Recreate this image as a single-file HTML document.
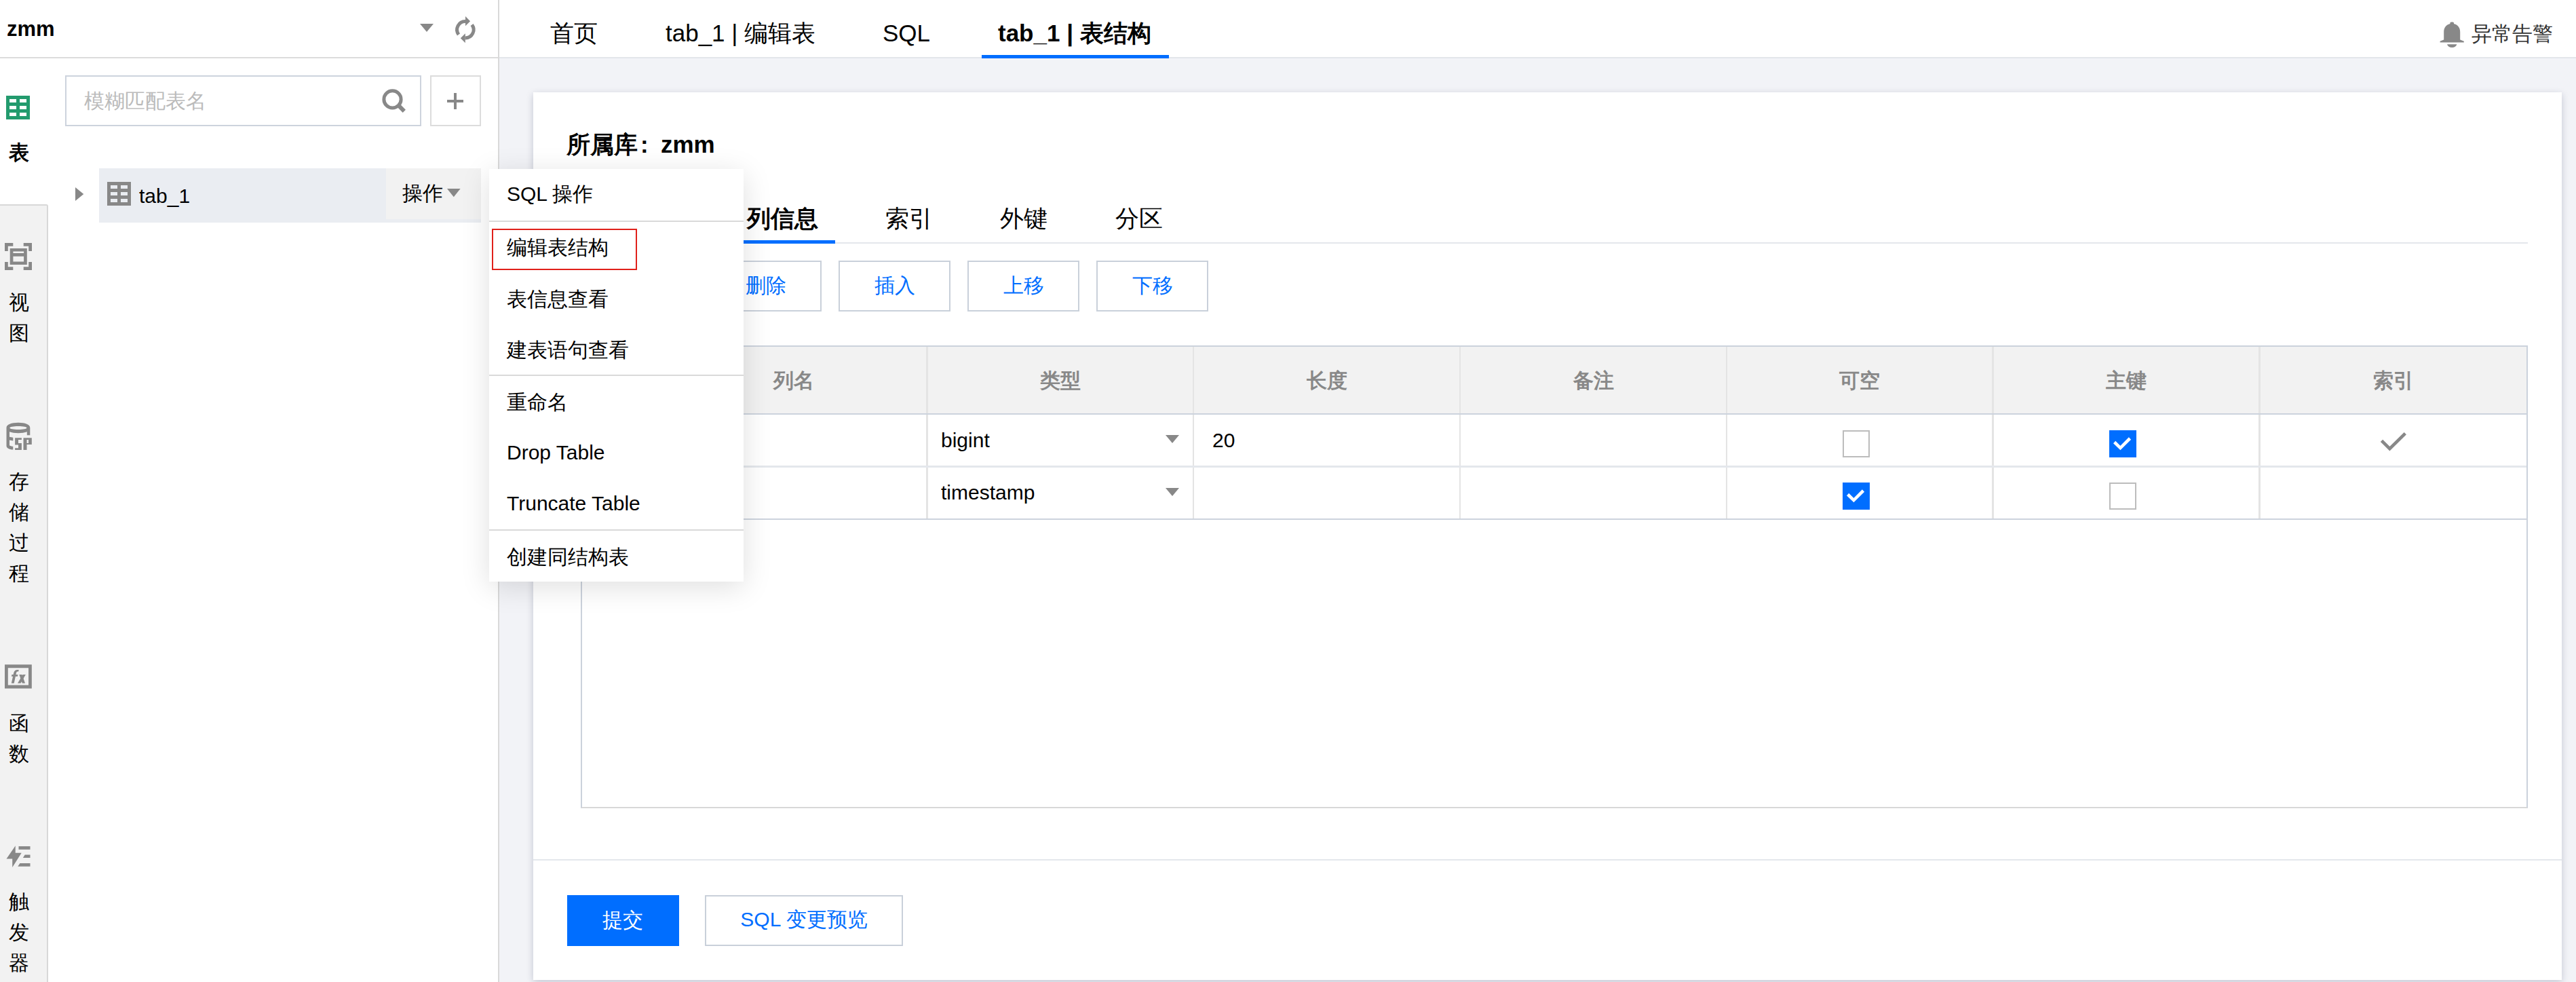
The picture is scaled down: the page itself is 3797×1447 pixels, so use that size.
<!DOCTYPE html>
<html><head><meta charset="utf-8">
<style>
html,body{margin:0;padding:0;}
body{width:3797px;height:1447px;overflow:hidden;position:relative;background:#f2f3f7;font-family:"Liberation Sans",sans-serif;color:#000;}
.a{position:absolute;}
.t{position:absolute;white-space:nowrap;line-height:1;}
svg{position:absolute;overflow:visible;}
/* left panel */
#lp{left:0;top:0;width:734px;height:1447px;background:#fff;border-right:2px solid #d9d9d9;}
#lphead{left:0;top:0;width:734px;height:84px;border-bottom:2px solid #dcdcdc;}
#strip{left:0;top:301px;width:69px;height:1146px;background:#f2f2f2;border-top:2px solid #d8d8d8;border-right:2px solid #d8d8d8;border-top-right-radius:3px;}
.sl{position:absolute;left:0;width:55px;text-align:center;font-size:30px;line-height:45px;color:#000;}
/* header */
#hd{left:736px;top:0;width:3061px;height:84px;background:#fff;border-bottom:2px solid #e3e6eb;}
.tab{position:absolute;top:0;font-size:35px;line-height:1;white-space:nowrap;}
/* card */
#card{left:786px;top:136px;width:2990px;height:1308px;background:#fff;box-shadow:0 3px 10px rgba(30,40,80,0.22);}
.btn{position:absolute;box-sizing:border-box;border:2px solid #c9d0da;background:#fff;color:#006eff;font-size:30px;text-align:center;white-space:nowrap;}
.th{position:absolute;top:511px;height:100px;font-size:30px;font-weight:bold;color:#888;line-height:100px;text-align:center;}
.cb{position:absolute;box-sizing:border-box;width:40px;height:40px;border:2px solid #bcbcbc;background:#fff;}
.cbc{position:absolute;width:40px;height:40px;background:#006eff;}
/* menu */
#menu{left:721px;top:249px;width:375px;height:608px;background:#fff;box-shadow:0 8px 40px rgba(0,0,0,0.13);}
.mi{position:absolute;left:26px;font-size:30px;line-height:1;white-space:nowrap;color:#000;}
.msep{position:absolute;left:0;width:375px;height:2px;background:#d9d9d9;}
</style></head>
<body>
<!-- left panel -->
<div id="lp" class="a"></div>
<div id="lphead" class="a"></div>
<div class="t" style="left:10px;top:27px;font-size:31px;font-weight:bold;">zmm</div>
<svg style="left:619px;top:35px" width="20" height="14"><path d="M0 0H20L10 12Z" fill="#888"/></svg>
<svg style="left:660px;top:15px" width="50" height="55" viewBox="0 0 50 55">
 <path d="M16 36A12.2 12.2 0 0 1 26 16.6" fill="none" stroke="#888" stroke-width="5"/>
 <path d="M26 9L33.1 16.2L26 23.2Z" fill="#888"/>
 <path d="M35.6 21.4A12.2 12.2 0 0 1 25.9 41" fill="none" stroke="#888" stroke-width="5"/>
 <path d="M25.8 34.2L18.8 41.2L25.8 48.2Z" fill="#888"/>
</svg>

<div id="strip" class="a"></div>

<!-- strip icons -->
<svg style="left:9px;top:141px" width="35" height="35" viewBox="0 0 35 35"><path fill="#239b6e" fill-rule="evenodd" d="M0 0H35V35H0Z M5 5V10H15V5Z M20 5V10H30V5Z M5 15V20H15V15Z M20 15V20H30V15Z M5 25V30H15V25Z M20 25V30H30V25Z"/></svg>
<div class="sl" style="top:202px;font-weight:bold;">表</div>
<svg style="left:7px;top:358px" width="40" height="40" viewBox="0 0 40 40"><g fill="#888">
 <path d="M0 0H12.3V4.8H4.8V12H0Z"/><path d="M40 0H27.7V4.8H35.2V12H40Z"/>
 <path d="M0 40H12.3V35.2H4.8V28H0Z"/><path d="M40 40H27.7V35.2H35.2V28H40Z"/>
 <path fill-rule="evenodd" d="M7.7 7.9H32.8V31.9H7.7Z M12.4 12.4V15.1H28.1V12.4Z M12.4 19.8V27.4H28.1V19.8Z"/>
</g></svg>
<div class="sl" style="top:423px;">视<br>图</div>
<svg style="left:0px;top:615px" width="55" height="55" viewBox="0 0 55 55"><g fill="#888">
 <path fill-rule="evenodd" d="M9.5 15.2C9.5 10.5 17 7.8 26.9 7.8C36.8 7.8 44.3 10.5 44.3 15.2V26.3H39.8V21.3C36.5 22.6 31.8 23.2 26.9 23.2C22 23.2 17.3 22.6 14 21.3V28.8L19.3 29.8V34.5L14 33.5V41.2C15.3 42.2 17 42.6 19.3 42.8V47.6C13 47.3 9.5 44.8 9.5 42V15.2Z M14.3 15.4C14.3 16.9 19.7 17.9 26.9 17.9C34.1 17.9 39.5 16.9 39.5 15.4C39.5 13.9 34.1 12.9 26.9 12.9C19.7 12.9 14.3 13.9 14.3 15.4Z"/>
 <path d="M22.1 30.3H31.9V32.9H27V38H31.9V47.9H22.1V45.3H27V40.5H22.1Z"/>
 <path fill-rule="evenodd" d="M34.5 30.3H46.8V40H39.5V47.9H34.5Z M39.5 33V38H42V33Z"/>
</g></svg>
<div class="sl" style="top:687px;">存<br>储<br>过<br>程</div>
<svg style="left:0px;top:970px" width="55" height="55" viewBox="0 0 55 55"><g fill="#888"><path fill-rule="evenodd" d="M7 9.2H46.8V44.5H7Z M11.8 14.2V39.5H42V14.2Z"/>
 <path d="M20.7 36.7H16.8L20.2 21.5C21 18.2 23 17 25.5 17H27.7L27.2 19.6H26C24.8 19.6 24.3 20.3 24 21.6Z"/>
 <path d="M17.4 24.1H26.4L25.9 26.7H16.9Z"/>
 <path d="M28.3 24.1H32.5L37 36.7H32.8Z"/>
 <path d="M33.6 24.1H37.8L30.5 36.7H26Z"/>
</g></svg>
<div class="sl" style="top:1043px;">函<br>数</div>
<svg style="left:0px;top:1235px" width="55" height="55" viewBox="0 0 55 55"><g fill="#888">
 <path d="M22.7 11.2V21.8H31.7L18.2 43.1V30.5H9.5Z"/>
 <path d="M27.5 12H44.5V16.8H27.5Z"/>
 <path d="M36.7 24.6H44.5V29.1H33.9Z"/>
 <path d="M29.4 37H44.5V41.7H26.3Z"/>
</g></svg>
<div class="sl" style="top:1306px;">触<br>发<br>器</div>

<!-- search -->
<div class="a" style="left:96px;top:111px;width:525px;height:75px;box-sizing:border-box;border:2px solid #cdd3dd;background:#fff;"></div>
<div class="t" style="left:124px;top:134px;font-size:30px;color:#bbb;">模糊匹配表名</div>
<svg style="left:550px;top:120px" width="60" height="60" viewBox="0 0 60 60"><circle cx="28.5" cy="26.4" r="12.6" fill="none" stroke="#888" stroke-width="5"/><path d="M36.2 34.2L45.8 43.8" stroke="#888" stroke-width="6"/></svg>
<div class="a" style="left:634px;top:111px;width:75px;height:75px;box-sizing:border-box;border:2px solid #dcdcdc;background:#fff;"></div>
<div class="a" style="left:658.6px;top:146.7px;width:24.6px;height:4.6px;background:#888;"></div>
<div class="a" style="left:668.5px;top:136.6px;width:4.8px;height:24.7px;background:#888;"></div>

<!-- tree row -->
<div class="a" style="left:146px;top:248px;width:563px;height:80px;background:#eaedf2;"></div>
<div class="a" style="left:569px;top:248px;width:140px;height:75px;background:#f2f2f2;"></div>
<svg style="left:111px;top:276px" width="13" height="20"><path d="M0 0L12.3 10L0 20Z" fill="#888"/></svg>
<svg style="left:158px;top:268px" width="35" height="35" viewBox="0 0 35 35"><path fill="#888" fill-rule="evenodd" d="M0 0H35V35H0Z M5 5V10H15V5Z M20 5V10H30V5Z M5 15V20H15V15Z M20 15V20H30V15Z M5 25V30H15V25Z M20 25V30H30V25Z"/></svg>
<div class="t" style="left:205px;top:274px;font-size:30px;">tab_1</div>
<div class="t" style="left:593px;top:270px;font-size:30px;">操作</div>
<svg style="left:659px;top:278px" width="20" height="13"><path d="M0 0H19.6L9.8 12.2Z" fill="#888"/></svg>


<!-- header -->
<div id="hd" class="a"></div>
<div class="tab" style="left:811px;top:31px;">首页</div>
<div class="tab" style="left:981px;top:31px;">tab_1 | 编辑表</div>
<div class="tab" style="left:1301px;top:31px;">SQL</div>
<div class="tab" style="left:1471px;top:31px;font-weight:bold;">tab_1 | 表结构</div>
<div class="a" style="left:1447px;top:81px;width:276px;height:5px;background:#006eff;"></div>
<svg style="left:3590px;top:30px" width="50" height="45" viewBox="0 0 50 45"><g fill="#888">
 <rect x="21.4" y="2.4" width="5.6" height="4" rx="1.5"/>
 <path d="M24.2 4.8C31.5 4.8 36.2 9.8 36.2 17V28.4L41.8 30.8V32.6H6.6V30.8L12.2 28.4V17C12.2 9.8 16.9 4.8 24.2 4.8Z"/>
 <path d="M17 35.2H31.4C30.6 38.2 27.8 40 24.2 40C20.6 40 17.8 38.2 17 35.2Z"/>
</g></svg>
<div class="t" style="left:3643px;top:35px;font-size:30px;color:#333;">异常告警</div>

<!-- card -->
<div id="card" class="a"></div>
<div class="t" style="left:835px;top:195px;font-size:35px;font-weight:bold;">所属库</div><div class="t" style="left:944px;top:195px;font-size:35px;font-weight:bold;">:</div><div class="t" style="left:974px;top:195px;font-size:35px;font-weight:bold;">zmm</div>
<div class="t" style="left:1101px;top:304px;font-size:35px;font-weight:bold;">列信息</div>
<div class="t" style="left:1305px;top:304px;font-size:35px;">索引</div>
<div class="t" style="left:1474px;top:304px;font-size:35px;">外键</div>
<div class="t" style="left:1644px;top:304px;font-size:35px;">分区</div>
<div class="a" style="left:836px;top:357px;width:2890px;height:2px;background:#e4e7ec;"></div>
<div class="a" style="left:1076px;top:354px;width:155px;height:5px;background:#006eff;"></div>
<div class="btn" style="left:856px;top:384px;width:165px;height:75px;line-height:69px;">添加</div>
<div class="btn" style="left:1046px;top:384px;width:165px;height:75px;line-height:69px;">删除</div>
<div class="btn" style="left:1236px;top:384px;width:165px;height:75px;line-height:69px;">插入</div>
<div class="btn" style="left:1426px;top:384px;width:165px;height:75px;line-height:69px;">上移</div>
<div class="btn" style="left:1616px;top:384px;width:165px;height:75px;line-height:69px;">下移</div>

<!-- table -->
<div class="a" style="left:856px;top:509px;width:2870px;height:682px;box-sizing:border-box;border:2px solid #cbd2dc;border-bottom-color:#d8d8d8;background:#fff;"></div>
<div class="a" style="left:858px;top:511px;width:2866px;height:98px;background:#f2f2f2;"></div>
<div class="a" style="left:973px;top:511px;width:2px;height:253px;background:#e4e4e4;"></div>
<div class="a" style="left:1365px;top:511px;width:3px;height:253px;background:#e4e4e4;"></div>
<div class="a" style="left:1758px;top:511px;width:2px;height:253px;background:#e4e4e4;"></div>
<div class="a" style="left:2151px;top:511px;width:2px;height:253px;background:#e4e4e4;"></div>
<div class="a" style="left:2544px;top:511px;width:2px;height:253px;background:#e4e4e4;"></div>
<div class="a" style="left:2936px;top:511px;width:3px;height:253px;background:#e4e4e4;"></div>
<div class="a" style="left:3329px;top:511px;width:3px;height:253px;background:#e4e4e4;"></div>
<div class="a" style="left:858px;top:609px;width:2866px;height:2px;background:#ccd3dd;"></div>
<div class="a" style="left:858px;top:686px;width:2866px;height:3px;background:#e4e7ec;"></div>
<div class="a" style="left:858px;top:764px;width:2866px;height:2px;background:#ccd3dd;"></div>
<div class="th" style="left:975px;width:390px;">列名</div>
<div class="th" style="left:1367px;width:391px;">类型</div>
<div class="th" style="left:1760px;width:391px;">长度</div>
<div class="th" style="left:2153px;width:391px;">备注</div>
<div class="th" style="left:2546px;width:390px;">可空</div>
<div class="th" style="left:2938px;width:392px;">主键</div>
<div class="th" style="left:3332px;width:391px;">索引</div>
<div class="t" style="left:1387px;top:634px;font-size:30px;">bigint</div>
<svg style="left:1718px;top:641px" width="22" height="14"><path d="M0 0H20L10 12Z" fill="#888"/></svg>
<div class="t" style="left:1787px;top:634px;font-size:30px;">20</div>
<div class="cb" style="left:2716px;top:634px;"></div>
<div class="cbc" style="left:3109px;top:634px;"><svg style="left:0;top:0" width="40" height="40"><path d="M7.6 17.5L16.4 26.1L30.5 12" fill="none" stroke="#fff" stroke-width="4.6"/></svg></div>
<svg style="left:3508px;top:636px" width="40" height="30"><path d="M2.5 13.3L14.4 25.2L37.3 2.6" fill="none" stroke="#888" stroke-width="4.7"/></svg>
<div class="t" style="left:1387px;top:711px;font-size:30px;">timestamp</div>
<svg style="left:1718px;top:719px" width="22" height="14"><path d="M0 0H20L10 12Z" fill="#888"/></svg>
<div class="cbc" style="left:2716px;top:711px;"><svg style="left:0;top:0" width="40" height="40"><path d="M7.6 17.5L16.4 26.1L30.5 12" fill="none" stroke="#fff" stroke-width="4.6"/></svg></div>
<div class="cb" style="left:3109px;top:711px;"></div>

<!-- footer -->
<div class="a" style="left:786px;top:1266px;width:2990px;height:2px;background:#e4e7ec;"></div>
<div class="btn" style="left:836px;top:1319px;width:165px;height:75px;line-height:73px;border:none;background:#006eff;color:#fff;"><span style="position:relative;left:-1px">提交</span></div>
<div class="btn" style="left:1039px;top:1319px;width:292px;height:75px;line-height:67px;">SQL 变更预览</div>

<!-- menu -->
<div id="menu" class="a">
 <div class="mi" style="top:22px;">SQL 操作</div>
 <div class="msep" style="top:76px;"></div>
 <div class="mi" style="top:101px;">编辑表结构</div>
 <div class="mi" style="top:177px;">表信息查看</div>
 <div class="mi" style="top:252px;">建表语句查看</div>
 <div class="msep" style="top:303px;"></div>
 <div class="mi" style="top:329px;">重命名</div>
 <div class="mi" style="top:403px;">Drop Table</div>
 <div class="mi" style="top:478px;">Truncate Table</div>
 <div class="msep" style="top:531px;"></div>
 <div class="mi" style="top:557px;">创建同结构表</div>
 <div class="a" style="left:4px;top:88px;width:214px;height:61px;box-sizing:border-box;border:2px solid #e0201a;"></div>
</div>

</body></html>
